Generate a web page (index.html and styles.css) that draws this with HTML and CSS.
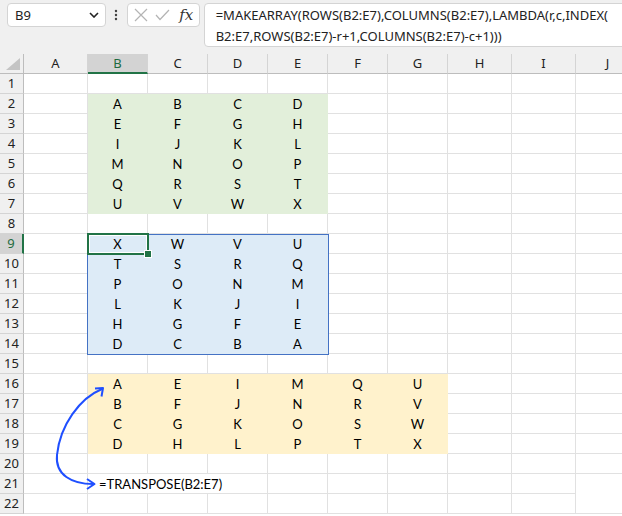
FILE: index.html
```html
<!DOCTYPE html>
<html>
<head>
<meta charset="utf-8">
<link rel="stylesheet" href="styles.css">
</head>
<body>
<div class="app">
  <div class="topbar">
    <div class="namebox">
      <span class="ref">B9</span>
      <svg class="chev" width="10" height="6" viewBox="0 0 10 6"><path d="M1 1 L5 5 L9 1" fill="none" stroke="#222" stroke-width="1.6"/></svg>
    </div>
    <svg class="dots" width="4" height="12" viewBox="0 0 4 12"><circle cx="2" cy="2" r="1.2" fill="#444"/><circle cx="2" cy="6" r="1.2" fill="#444"/><circle cx="2" cy="10" r="1.2" fill="#444"/></svg>
    <div class="iconbox">
      <svg width="14" height="14" viewBox="0 0 14 14"><path d="M1 1 L13 13 M13 1 L1 13" stroke="#b4b4b4" stroke-width="1.2" fill="none"/></svg>
      <svg width="15" height="12" viewBox="0 0 15 12"><path d="M1 6 L5 10.5 L14 1" stroke="#b4b4b4" stroke-width="1.2" fill="none"/></svg>
      <span class="fx">fx</span>
    </div>
    <div class="formula">=MAKEARRAY(ROWS(B2:E7),COLUMNS(B2:E7),LAMBDA(r,c,INDEX(<br>B2:E7,ROWS(B2:E7)-r+1,COLUMNS(B2:E7)-c+1)))</div>
  </div>

  <div class="sheet">
    <div class="row hdr">
      <div class="corner"><svg width="14" height="12" viewBox="0 0 14 12"><polygon points="14,0 14,12 0,12" fill="#c4c4c4"/></svg></div>
      <div class="ch">A</div><div class="ch sel-h">B</div><div class="ch">C</div><div class="ch">D</div><div class="ch">E</div><div class="ch">F</div><div class="ch">G</div><div class="ch">H</div><div class="ch">I</div><div class="ch">J</div>
    </div>
    <div class="row"><div class="rh">1</div><div class="c"></div><div class="c"></div><div class="c"></div><div class="c"></div><div class="c"></div><div class="c"></div><div class="c"></div><div class="c"></div><div class="c"></div><div class="c"></div></div>
    <div class="row"><div class="rh">2</div><div class="c"></div><div class="c g">A</div><div class="c g">B</div><div class="c g">C</div><div class="c g">D</div><div class="c"></div><div class="c"></div><div class="c"></div><div class="c"></div><div class="c"></div></div>
    <div class="row"><div class="rh">3</div><div class="c"></div><div class="c g">E</div><div class="c g">F</div><div class="c g">G</div><div class="c g">H</div><div class="c"></div><div class="c"></div><div class="c"></div><div class="c"></div><div class="c"></div></div>
    <div class="row"><div class="rh">4</div><div class="c"></div><div class="c g">I</div><div class="c g">J</div><div class="c g">K</div><div class="c g">L</div><div class="c"></div><div class="c"></div><div class="c"></div><div class="c"></div><div class="c"></div></div>
    <div class="row"><div class="rh">5</div><div class="c"></div><div class="c g">M</div><div class="c g">N</div><div class="c g">O</div><div class="c g">P</div><div class="c"></div><div class="c"></div><div class="c"></div><div class="c"></div><div class="c"></div></div>
    <div class="row"><div class="rh">6</div><div class="c"></div><div class="c g">Q</div><div class="c g">R</div><div class="c g">S</div><div class="c g">T</div><div class="c"></div><div class="c"></div><div class="c"></div><div class="c"></div><div class="c"></div></div>
    <div class="row"><div class="rh">7</div><div class="c"></div><div class="c g">U</div><div class="c g">V</div><div class="c g">W</div><div class="c g">X</div><div class="c"></div><div class="c"></div><div class="c"></div><div class="c"></div><div class="c"></div></div>
    <div class="row"><div class="rh">8</div><div class="c"></div><div class="c"></div><div class="c"></div><div class="c"></div><div class="c"></div><div class="c"></div><div class="c"></div><div class="c"></div><div class="c"></div><div class="c"></div></div>
    <div class="row"><div class="rh sel-r">9</div><div class="c"></div><div class="c b">X</div><div class="c b">W</div><div class="c b">V</div><div class="c b">U</div><div class="c"></div><div class="c"></div><div class="c"></div><div class="c"></div><div class="c"></div></div>
    <div class="row"><div class="rh">10</div><div class="c"></div><div class="c b">T</div><div class="c b">S</div><div class="c b">R</div><div class="c b">Q</div><div class="c"></div><div class="c"></div><div class="c"></div><div class="c"></div><div class="c"></div></div>
    <div class="row"><div class="rh">11</div><div class="c"></div><div class="c b">P</div><div class="c b">O</div><div class="c b">N</div><div class="c b">M</div><div class="c"></div><div class="c"></div><div class="c"></div><div class="c"></div><div class="c"></div></div>
    <div class="row"><div class="rh">12</div><div class="c"></div><div class="c b">L</div><div class="c b">K</div><div class="c b">J</div><div class="c b">I</div><div class="c"></div><div class="c"></div><div class="c"></div><div class="c"></div><div class="c"></div></div>
    <div class="row"><div class="rh">13</div><div class="c"></div><div class="c b">H</div><div class="c b">G</div><div class="c b">F</div><div class="c b">E</div><div class="c"></div><div class="c"></div><div class="c"></div><div class="c"></div><div class="c"></div></div>
    <div class="row"><div class="rh">14</div><div class="c"></div><div class="c b">D</div><div class="c b">C</div><div class="c b">B</div><div class="c b">A</div><div class="c"></div><div class="c"></div><div class="c"></div><div class="c"></div><div class="c"></div></div>
    <div class="row"><div class="rh">15</div><div class="c"></div><div class="c"></div><div class="c"></div><div class="c"></div><div class="c"></div><div class="c"></div><div class="c"></div><div class="c"></div><div class="c"></div><div class="c"></div></div>
    <div class="row"><div class="rh">16</div><div class="c"></div><div class="c y">A</div><div class="c y">E</div><div class="c y">I</div><div class="c y">M</div><div class="c y">Q</div><div class="c y">U</div><div class="c"></div><div class="c"></div><div class="c"></div></div>
    <div class="row"><div class="rh">17</div><div class="c"></div><div class="c y">B</div><div class="c y">F</div><div class="c y">J</div><div class="c y">N</div><div class="c y">R</div><div class="c y">V</div><div class="c"></div><div class="c"></div><div class="c"></div></div>
    <div class="row"><div class="rh">18</div><div class="c"></div><div class="c y">C</div><div class="c y">G</div><div class="c y">K</div><div class="c y">O</div><div class="c y">S</div><div class="c y">W</div><div class="c"></div><div class="c"></div><div class="c"></div></div>
    <div class="row"><div class="rh">19</div><div class="c"></div><div class="c y">D</div><div class="c y">H</div><div class="c y">L</div><div class="c y">P</div><div class="c y">T</div><div class="c y">X</div><div class="c"></div><div class="c"></div><div class="c"></div></div>
    <div class="row"><div class="rh">20</div><div class="c"></div><div class="c"></div><div class="c"></div><div class="c"></div><div class="c"></div><div class="c"></div><div class="c"></div><div class="c"></div><div class="c"></div><div class="c"></div></div>
    <div class="row"><div class="rh">21</div><div class="c"></div><div class="c txt span3">=TRANSPOSE(B2:E7)</div><div class="c"></div><div class="c"></div><div class="c"></div><div class="c"></div><div class="c"></div></div>
    <div class="row"><div class="rh">22</div><div class="c"></div><div class="c"></div><div class="c"></div><div class="c"></div><div class="c"></div><div class="c"></div><div class="c"></div><div class="c"></div><div class="c"></div><div class="c"></div></div>

    <div class="selection"></div>
    <div class="active"><span class="handle"></span></div>
    <svg class="arrow" width="200" height="200" viewBox="0 320 200 200">
      <path d="M102 389 C80 398 60 425 57 455 C55 475 72 484 93 484" fill="none" stroke="#1f4fff" stroke-width="2"/>
      <path d="M95 388.5 L103 388 L101.5 396.5" fill="none" stroke="#1f4fff" stroke-width="2" stroke-linejoin="round"/>
      <path d="M87 479 L94.5 484 L87 489" fill="none" stroke="#1f4fff" stroke-width="2" stroke-linejoin="round"/>
    </svg>
  </div>
</div>
</body>
</html>
```

FILE: styles.css
```css
* { box-sizing: border-box; }
html, body { margin: 0; padding: 0; background: #fff; }
body { overflow: hidden; width: 622px; height: 516px; }
.app { width: 640px; }

.topbar {
  height: 54px;
  background: #f0f0f0;
  position: relative;
  display: flex;
  align-items: flex-start;
  padding: 3px 0 0 7px;
}
.namebox {
  width: 100px;
  height: 24px;
  background: #fff;
  border: 1px solid #d4d4d4;
  border-radius: 4px;
  display: flex;
  align-items: center;
  justify-content: space-between;
  padding: 0 6px 0 7px;
  font-family: "Noto Sans", sans-serif;
  font-size: 13px;
  color: #222;
}
.dots { margin: 6px 0 0 8px; }
.iconbox {
  margin-left: 9px;
  width: 73px;
  height: 24px;
  background: #fff;
  border: 1px solid #d4d4d4;
  border-radius: 4px;
  display: flex;
  align-items: center;
  gap: 7px;
  padding-left: 6px;
}
.fx {
  font-family: "DejaVu Serif", "Liberation Serif", serif;
  font-style: italic;
  font-size: 15px;
  color: #333;
  margin-left: 2px;
}
.formula {
  margin-left: 4px;
  width: 440px;
  height: 44px;
  background: #fff;
  border: 1px solid #d4d4d4;
  border-radius: 4px;
  padding: 1px 0 0 11px;
  font-family: "Noto Sans", sans-serif;
  font-size: 13px;
  line-height: 21px;
  color: #222;
  white-space: nowrap;
  overflow: hidden;
}

.sheet { position: relative; }
.row {
  display: grid;
  grid-template-columns: 24px 64px 60px 60px 60px 60px 60px 60px 64px 64px 64px;
  height: 20px;
}
.hdr .ch, .corner {
  background: #f0f0f0;
  border-right: 1px solid #d4d4d4;
  border-bottom: 1px solid #bdbdbd;
  font-family: "Noto Sans", sans-serif;
  font-size: 13px;
  color: #222;
  display: flex;
  align-items: center;
  justify-content: center;
  line-height: 1;
}
.corner { justify-content: flex-end; align-items: flex-end; padding: 0 3px 3px 0; border-right-color: #bdbdbd; }
.hdr .sel-h {
  background: #d3d3d3;
  color: #1e6b40;
  border-bottom: 2px solid #217346;
}
.rh {
  background: #f0f0f0;
  border-right: 1px solid #bdbdbd;
  border-bottom: 1px solid #d4d4d4;
  font-family: "Noto Sans", sans-serif;
  font-size: 13px;
  color: #222;
  display: flex;
  align-items: center;
  justify-content: center;
  line-height: 1;
}
.rh.sel-r {
  background: #d3d3d3;
  color: #1e6b40;
  border-right: 2px solid #217346;
}
.c {
  border-right: 1px solid #e1e1e1;
  border-bottom: 1px solid #e1e1e1;
  font-family: Lato, "Open Sans", sans-serif;
  font-size: 13px;
  color: #000;
  display: flex;
  align-items: center;
  justify-content: center;
  line-height: 1;
  padding-top: 1px;
}
.c.g { background: #e2efda; border-color: #e2efda; }
.c.b { background: #ddebf7; border-color: #ddebf7; }
.c.y { background: #fff2cc; border-color: #fff2cc; }
.c.txt { justify-content: flex-start; padding-left: 11px; white-space: nowrap; }
.span3 { grid-column: span 3; }

.selection {
  position: absolute;
  left: 87px;
  top: 180px;
  width: 242px;
  height: 121px;
  border: 1px solid #4472c4;
  pointer-events: none;
}
.active {
  position: absolute;
  left: 87px;
  top: 179px;
  width: 62px;
  height: 22px;
  border: 2px solid #217346;
  box-shadow: inset 0 0 0 1px #fff;
}
.handle {
  position: absolute;
  right: -5px;
  bottom: -5px;
  width: 6px;
  height: 6px;
  background: #217346;
  border: 1px solid #fff;
  box-sizing: content-box;
}
.arrow {
  position: absolute;
  left: 0;
  top: 266px;
  overflow: visible;
}
```
